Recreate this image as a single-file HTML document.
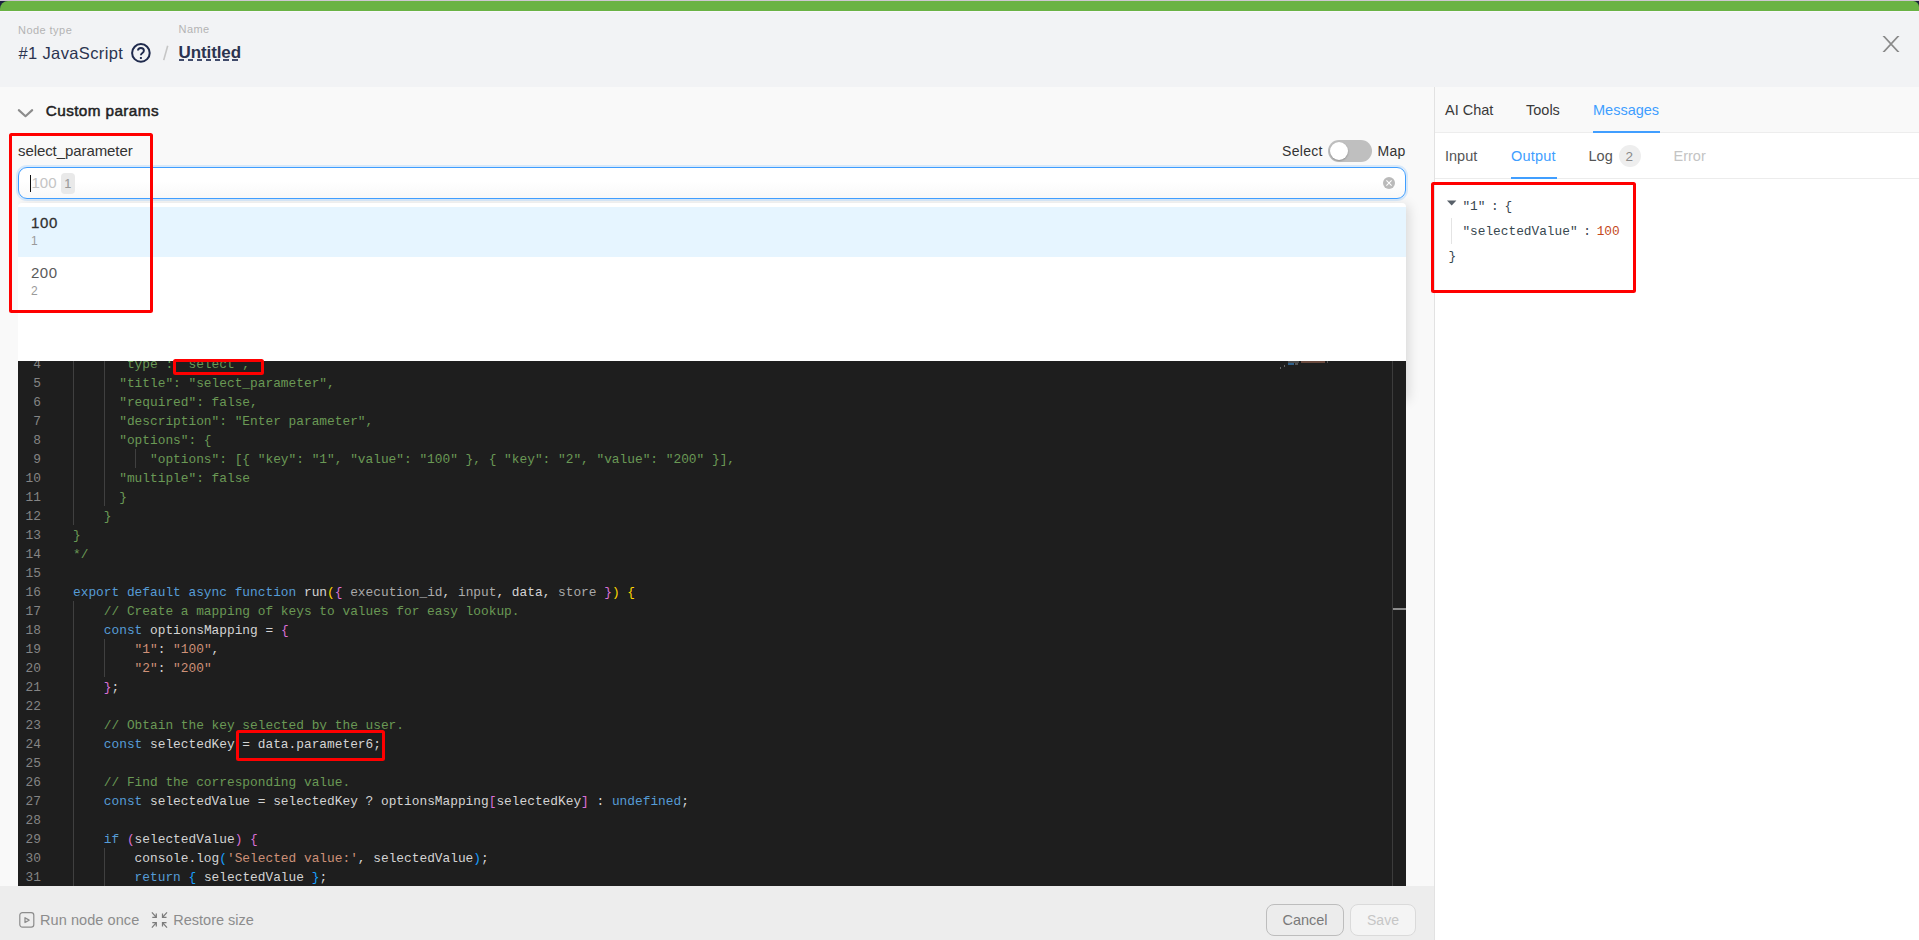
<!DOCTYPE html>
<html>
<head>
<meta charset="utf-8">
<title>Node editor</title>
<style>
*{box-sizing:border-box;margin:0;padding:0}
html,body{width:1919px;height:940px;overflow:hidden;background:#f9f9f9;font-family:"Liberation Sans",sans-serif;color:#2b2b2b}
.abs{position:absolute}
#root{position:relative;width:1919px;height:940px;overflow:hidden;background:#f9f9f9}
.t{position:absolute;white-space:nowrap;line-height:1}
/* top */
#topline{left:0;top:0;width:1919px;height:1px;background:#cfc8d3}
#green{left:0;top:1px;width:1919px;height:10px;background:#6ab344}
#whiteline{left:0;top:11px;width:1919px;height:1px;background:#faf7fc}
#header{left:0;top:12px;width:1919px;height:75px;background:#f2f3f5}
.lbl{font-size:11px;color:#b4b4b4;letter-spacing:.45px}
.h1{font-size:17px;color:#2b3350}
/* panels */
#left{left:0;top:87px;width:1434px;height:799px;background:#f9f9f9}
#bottom{left:0;top:886px;width:1434px;height:54px;background:#ededed}
#rightborder{left:1434px;top:87px;width:1px;height:853px;background:#e2e2e2}
#right{left:1435px;top:87px;width:484px;height:853px;background:#fff}
#rtabs{left:1435px;top:87px;width:484px;height:46px;background:#f9f9f9;border-bottom:1px solid #ededed}
#rsub{left:1435px;top:133px;width:484px;height:46px;background:#fff;border-bottom:1px solid #ececec}
.tab{font-size:14.5px;color:#3a3a3a}
.blue{color:#409eff}
.uline{position:absolute;height:2px;background:#409eff}
.red{border:3px solid #f00;border-radius:2.5px;position:absolute}
/* input + dropdown */
#inp{left:18px;top:167px;width:1388px;height:32px;border:1px solid #409eff;border-radius:9px;background:linear-gradient(#fff 45%,#f8f8f8);box-shadow:0 0 0 2px rgba(64,158,255,.18)}
#dd{left:18px;top:203px;width:1388px;height:196px;background:#fff;border-radius:4px;box-shadow:3px 2px 12px rgba(0,0,0,.13);clip-path:inset(-6px -40px -40px 0)}
#hl{left:18px;top:207px;width:1388px;height:50px;background:#e6f5ff}
/* code */
#editor{left:18px;top:361px;width:1388px;height:525px;background:#1e1e1e;overflow:hidden}
#code{position:absolute;left:0;top:-6.3px;width:1388px;font-family:"Liberation Mono",monospace;font-size:12.83px;line-height:19px;color:#d4d4d4}
.row{position:relative;height:19px}
.ln{position:absolute;left:0;width:23px;text-align:right;color:#858585}
.cl{position:absolute;left:55px;white-space:pre}
.c{color:#6a9955}.k{color:#569cd6}.s{color:#ce9178}.p{color:#da70d6}.y{color:#ffd700}.b{color:#179fff}.u{color:#aaaaaa}.w{color:#d4d4d4}
.guide{position:absolute;width:1px;background:#404040}
/* json */
.js{font-family:"Liberation Mono",monospace;font-size:12.8px;color:#37474f;word-spacing:-2px}
/* buttons */
.btn{position:absolute;height:32px;border-radius:8px;font-size:14.5px;text-align:center;line-height:30px}
</style>
</head>
<body>
<div id="root">
  <!-- top strip -->
  <div class="abs" id="topline"></div>
  <div class="abs" style="left:0;top:1px;width:8px;height:8px;background:#1b2140"></div>
  <div class="abs" style="left:1911px;top:1px;width:8px;height:8px;background:#1b2140"></div>
  <div class="abs" id="green" style="border-radius:8px 6px 0 0"></div>
  <div class="abs" id="whiteline"></div>
  <div class="abs" id="header"></div>

  <!-- header texts -->
  <div class="t lbl" style="left:18px;top:24.7px">Node type</div>
  <div class="t h1" style="left:18.4px;top:44.9px;font-size:16.5px;letter-spacing:.38px">#1 JavaScript</div>
  <svg class="abs" style="left:130px;top:42px" width="22" height="22" viewBox="0 0 22 22">
    <circle cx="10.9" cy="10.9" r="8.8" fill="none" stroke="#1f2a4d" stroke-width="2"/>
    <path d="M8 8.6 C8 6.7 9.4 6 10.9 6 C12.6 6 13.9 7.2 13.9 8.8 C13.9 11 10.9 11.1 10.9 13.3" fill="none" stroke="#1f2a4d" stroke-width="1.9" stroke-linecap="butt"/>
    <rect x="9.9" y="14.9" width="2" height="2" rx=".4" fill="#1f2a4d"/>
  </svg>
  <svg class="abs" style="left:160px;top:44px" width="12" height="18" viewBox="0 0 12 18"><path d="M3.7 16.1 L7.7 1.7" stroke="#c6c6c6" stroke-width="1.6" fill="none"/></svg>
  <div class="t lbl" style="left:178.5px;top:23.7px">Name</div>
  <div class="t h1" style="left:178.6px;top:44.3px;font-size:17px;font-weight:bold;letter-spacing:-.12px">Untitled</div>
  <div class="abs" style="left:179px;top:59px;width:62px;height:1.7px;background:repeating-linear-gradient(90deg,#414b6b 0 5.5px,transparent 5.5px 8.9px)"></div>
  <svg class="abs" style="left:1880px;top:33px" width="22" height="22" viewBox="0 0 22 22">
    <clipPath id="xc"><rect x="0" y="3.1" width="22" height="15.8"/></clipPath>
    <path d="M2.8 2.1 L19.2 19.9 M19.2 2.1 L2.8 19.9" stroke="#8a8a8a" stroke-width="1.7" fill="none" clip-path="url(#xc)"/>
  </svg>

  <!-- panels -->
  <div class="abs" id="left"></div>
  <div class="abs" id="bottom"></div>
  <div class="abs" id="rightborder"></div>
  <div class="abs" id="right"></div>
  <div class="abs" id="rtabs"></div>
  <div class="abs" id="rsub"></div>

  <!-- Custom params -->
  <svg class="abs" style="left:16px;top:105px" width="20" height="16" viewBox="0 0 20 16">
    <path d="M2.8 5.1 L9.5 11.2 L16.2 5.1" fill="none" stroke="#8c8c8c" stroke-width="2.1" stroke-linecap="round" stroke-linejoin="round"/>
  </svg>
  <div class="t" style="left:45.8px;top:103.2px;font-size:15.3px;color:#222;letter-spacing:.4px;-webkit-text-stroke:.5px #222">Custom params</div>

  <div class="t" style="left:18px;top:142.8px;font-size:15px;color:#333;letter-spacing:-.08px">select_parameter</div>
  <div class="t" style="left:1282px;top:144px;font-size:14px;color:#333;letter-spacing:.3px">Select</div>
  <div class="abs" style="left:1328px;top:140px;width:44px;height:22px;border-radius:11px;background:#bfbfbf"></div>
  <div class="abs" style="left:1330px;top:142px;width:18px;height:18px;border-radius:9px;background:#fff;box-shadow:0 1px 2px rgba(0,0,0,.25)"></div>
  <div class="t" style="left:1377.5px;top:144px;font-size:14px;color:#333;letter-spacing:.25px">Map</div>

  <!-- dropdown (under input) -->
  <div class="abs" id="dd"></div>
  <div class="abs" id="hl"></div>
  <div class="t" style="left:31px;top:214.8px;font-size:15px;color:#303030;letter-spacing:.6px;-webkit-text-stroke:.3px #303030">100</div>
  <div class="t" style="left:31px;top:234.7px;font-size:12px;color:#9a9a9a">1</div>
  <div class="t" style="left:31px;top:265.3px;font-size:15px;color:#5a5a5a;letter-spacing:.5px">200</div>
  <div class="t" style="left:31px;top:284.8px;font-size:12px;color:#9a9a9a">2</div>

  <!-- input -->
  <div class="abs" id="inp"></div>
  <div class="abs" style="left:30px;top:175px;width:1px;height:17px;background:#111"></div>
  <div class="t" style="left:31.5px;top:174.5px;font-size:15px;color:#c4c4c4">100</div>
  <div class="abs" style="left:61px;top:173px;width:14px;height:20.5px;border-radius:4px;background:#e9e9e9"></div>
  <div class="t" style="left:64.6px;top:177.5px;font-size:12px;color:#9a9a9a;-webkit-text-stroke:.2px #9a9a9a">1</div>
  <svg class="abs" style="left:1382px;top:176px" width="14" height="14" viewBox="0 0 14 14">
    <circle cx="7" cy="7" r="6" fill="#bababa"/>
    <path d="M4.4 4.4 L9.6 9.6 M9.6 4.4 L4.4 9.6" stroke="#fff" stroke-width="1.05"/>
  </svg>

  <!-- editor -->
  <div class="abs" id="editor">
    <div class="guide" style="left:55px;top:0;height:164px"></div>
    <div class="guide" style="left:86px;top:0;height:145px"></div>
    <div class="guide" style="left:117px;top:88px;height:19px"></div>
    <div class="guide" style="left:55px;top:240px;height:285px"></div>
    <div class="guide" style="left:86px;top:278px;height:38px"></div>
    <div class="guide" style="left:86px;top:487px;height:38px"></div>
    <div id="code">
<div class="row"><span class="ln">4</span><span class="cl"><span class="c">       type :  select ,</span></span></div>
<div class="row"><span class="ln">5</span><span class="cl"><span class="c">      "title": "select_parameter",</span></span></div>
<div class="row"><span class="ln">6</span><span class="cl"><span class="c">      "required": false,</span></span></div>
<div class="row"><span class="ln">7</span><span class="cl"><span class="c">      "description": "Enter parameter",</span></span></div>
<div class="row"><span class="ln">8</span><span class="cl"><span class="c">      "options": {</span></span></div>
<div class="row"><span class="ln">9</span><span class="cl"><span class="c">          "options": [{ "key": "1", "value": "100" }, { "key": "2", "value": "200" }],</span></span></div>
<div class="row"><span class="ln">10</span><span class="cl"><span class="c">      "multiple": false</span></span></div>
<div class="row"><span class="ln">11</span><span class="cl"><span class="c">      }</span></span></div>
<div class="row"><span class="ln">12</span><span class="cl"><span class="c">    }</span></span></div>
<div class="row"><span class="ln">13</span><span class="cl"><span class="c">}</span></span></div>
<div class="row"><span class="ln">14</span><span class="cl"><span class="c">*/</span></span></div>
<div class="row"><span class="ln">15</span><span class="cl"></span></div>
<div class="row"><span class="ln">16</span><span class="cl"><span class="k">export default async function</span><span class="w"> run</span><span class="y">(</span><span class="p">{</span><span class="u"> execution_id</span><span class="w">,</span><span class="u"> input</span><span class="w">, data,</span><span class="u"> store </span><span class="p">}</span><span class="y">)</span><span class="w"> </span><span class="y">{</span></span></div>
<div class="row"><span class="ln">17</span><span class="cl"><span class="c">    // Create a mapping of keys to values for easy lookup.</span></span></div>
<div class="row"><span class="ln">18</span><span class="cl"><span class="k">    const</span><span class="w"> optionsMapping = </span><span class="p">{</span></span></div>
<div class="row"><span class="ln">19</span><span class="cl"><span class="s">        "1"</span><span class="w">: </span><span class="s">"100"</span><span class="w">,</span></span></div>
<div class="row"><span class="ln">20</span><span class="cl"><span class="s">        "2"</span><span class="w">: </span><span class="s">"200"</span></span></div>
<div class="row"><span class="ln">21</span><span class="cl"><span class="w">    </span><span class="p">}</span><span class="w">;</span></span></div>
<div class="row"><span class="ln">22</span><span class="cl"></span></div>
<div class="row"><span class="ln">23</span><span class="cl"><span class="c">    // Obtain the key selected by the user.</span></span></div>
<div class="row"><span class="ln">24</span><span class="cl"><span class="k">    const</span><span class="w"> selectedKey = data.parameter6;</span></span></div>
<div class="row"><span class="ln">25</span><span class="cl"></span></div>
<div class="row"><span class="ln">26</span><span class="cl"><span class="c">    // Find the corresponding value.</span></span></div>
<div class="row"><span class="ln">27</span><span class="cl"><span class="k">    const</span><span class="w"> selectedValue = selectedKey ? optionsMapping</span><span class="p">[</span><span class="w">selectedKey</span><span class="p">]</span><span class="w"> : </span><span class="k">undefined</span><span class="w">;</span></span></div>
<div class="row"><span class="ln">28</span><span class="cl"></span></div>
<div class="row"><span class="ln">29</span><span class="cl"><span class="k">    if</span><span class="w"> </span><span class="p">(</span><span class="w">selectedValue</span><span class="p">)</span><span class="w"> </span><span class="p">{</span></span></div>
<div class="row"><span class="ln">30</span><span class="cl"><span class="w">        console.log</span><span class="b">(</span><span class="s">'Selected value:'</span><span class="w">, selectedValue</span><span class="b">)</span><span class="w">;</span></span></div>
<div class="row"><span class="ln">31</span><span class="cl"><span class="k">        return</span><span class="w"> </span><span class="b">{</span><span class="w"> selectedValue </span><span class="b">}</span><span class="w">;</span></span></div>
    </div>
    <!-- minimap bits -->
    <div class="abs" style="left:1270px;top:0;width:11px;height:2px;background:#4a4a4a"></div>
    <div class="abs" style="left:1283px;top:0;width:24px;height:2px;background:#6a4a3e"></div>
    <div class="abs" style="left:1309px;top:0;width:1px;height:2px;background:#555"></div>
    <div class="abs" style="left:1270px;top:2px;width:6px;height:2px;background:#30608a"></div>
    <div class="abs" style="left:1277px;top:2px;width:3px;height:2px;background:#555"></div>
    <div class="abs" style="left:1266px;top:4px;width:1px;height:2px;background:#666"></div>
    <div class="abs" style="left:1262px;top:6px;width:1px;height:2px;background:#666"></div>
    <!-- scrollbar -->
    <div class="abs" style="left:1374px;top:0;width:1px;height:525px;background:#3c3c3c"></div>
    <div class="abs" style="left:1375px;top:247px;width:13px;height:2px;background:#8c8c8c"></div>
  </div>

  <!-- bottom bar -->
  <svg class="abs" style="left:18px;top:911px" width="18" height="18" viewBox="0 0 18 18">
    <rect x="1.8" y="1.6" width="14" height="14.6" rx="2.6" fill="none" stroke="#8c8c8c" stroke-width="1.2"/>
    <path d="M7 6.7 L11.1 9.1 L7 11.5 Z" fill="none" stroke="#8c8c8c" stroke-width="1.3" stroke-linejoin="round"/>
  </svg>
  <div class="t" style="left:40px;top:912.9px;font-size:14.5px;color:#8c8c8c;letter-spacing:.07px">Run node once</div>
  <svg class="abs" style="left:150px;top:911px" width="20" height="18" viewBox="0 0 20 18">
    <g fill="none" stroke="#7c7c7c" stroke-width="1.25">
      <path d="M1.9 1.3 L6.3 6.4 M6.3 2.4 L6.3 6.4 L2.3 6.4"/>
      <path d="M17 1.3 L12.5 6.4 M12.5 2.4 L12.5 6.4 L16.5 6.4"/>
      <path d="M1.9 16.7 L6.3 11.6 M6.3 15.6 L6.3 11.6 L2.3 11.6"/>
      <path d="M17 16.7 L12.5 11.6 M12.5 15.6 L12.5 11.6 L16.5 11.6"/>
    </g>
  </svg>
  <div class="t" style="left:173.3px;top:912.9px;font-size:14.5px;color:#8c8c8c">Restore size</div>
  <div class="btn" style="left:1266px;top:904px;width:78px;border:1px solid #bdbdbd;background:#ececec;color:#7a7a7a">Cancel</div>
  <div class="btn" style="left:1350px;top:904px;width:66px;border:1px solid #dadada;background:#f4f4f4;color:#c6c6c6;font-size:14px">Save</div>

  <!-- right tabs -->
  <div class="t tab" style="left:1445px;top:102.8px">AI Chat</div>
  <div class="t tab" style="left:1526px;top:102.8px">Tools</div>
  <div class="t tab blue" style="left:1593px;top:102.8px">Messages</div>
  <div class="uline" style="left:1593px;top:131px;width:67px"></div>
  <div class="t tab" style="left:1445px;top:148.5px;color:#555">Input</div>
  <div class="t tab blue" style="left:1511px;top:148.5px;letter-spacing:.2px">Output</div>
  <div class="uline" style="left:1511px;top:177px;width:46px"></div>
  <div class="t tab" style="left:1588.5px;top:148.5px;color:#555">Log</div>
  <div class="abs" style="left:1618.5px;top:145px;width:22px;height:22px;border-radius:11px;background:#eeeeee"></div>
  <div class="t" style="left:1625.5px;top:149.5px;font-size:13.5px;color:#8a8a8a">2</div>
  <div class="t tab" style="left:1673.5px;top:148.5px;color:#c4c4c4">Error</div>

  <!-- json -->
  <svg class="abs" style="left:1446px;top:199px" width="12" height="8" viewBox="0 0 12 8"><path d="M1 1.4 L10.4 1.4 L5.7 6.4 Z" fill="#586069"/></svg>
  <div class="t js" style="left:1462.4px;top:200.7px">"1" : {</div>
  <div class="abs" style="left:1451px;top:218px;width:1px;height:26px;background:#e4e4e4"></div>
  <div class="t js" style="left:1462.4px;top:225.9px">"selectedValue" : <span style="color:#c4491c">100</span></div>
  <div class="t js" style="left:1448.6px;top:250.7px">}</div>

  <!-- red annotations -->
  <div class="red" style="left:9px;top:133px;width:144px;height:180px"></div>
  <div class="red" style="left:173px;top:359px;width:91.3px;height:16.4px"></div>
  <div class="red" style="left:236px;top:729.5px;width:149px;height:31.5px"></div>
  <div class="red" style="left:1431px;top:182px;width:205px;height:111px"></div>
</div>
</body>
</html>
